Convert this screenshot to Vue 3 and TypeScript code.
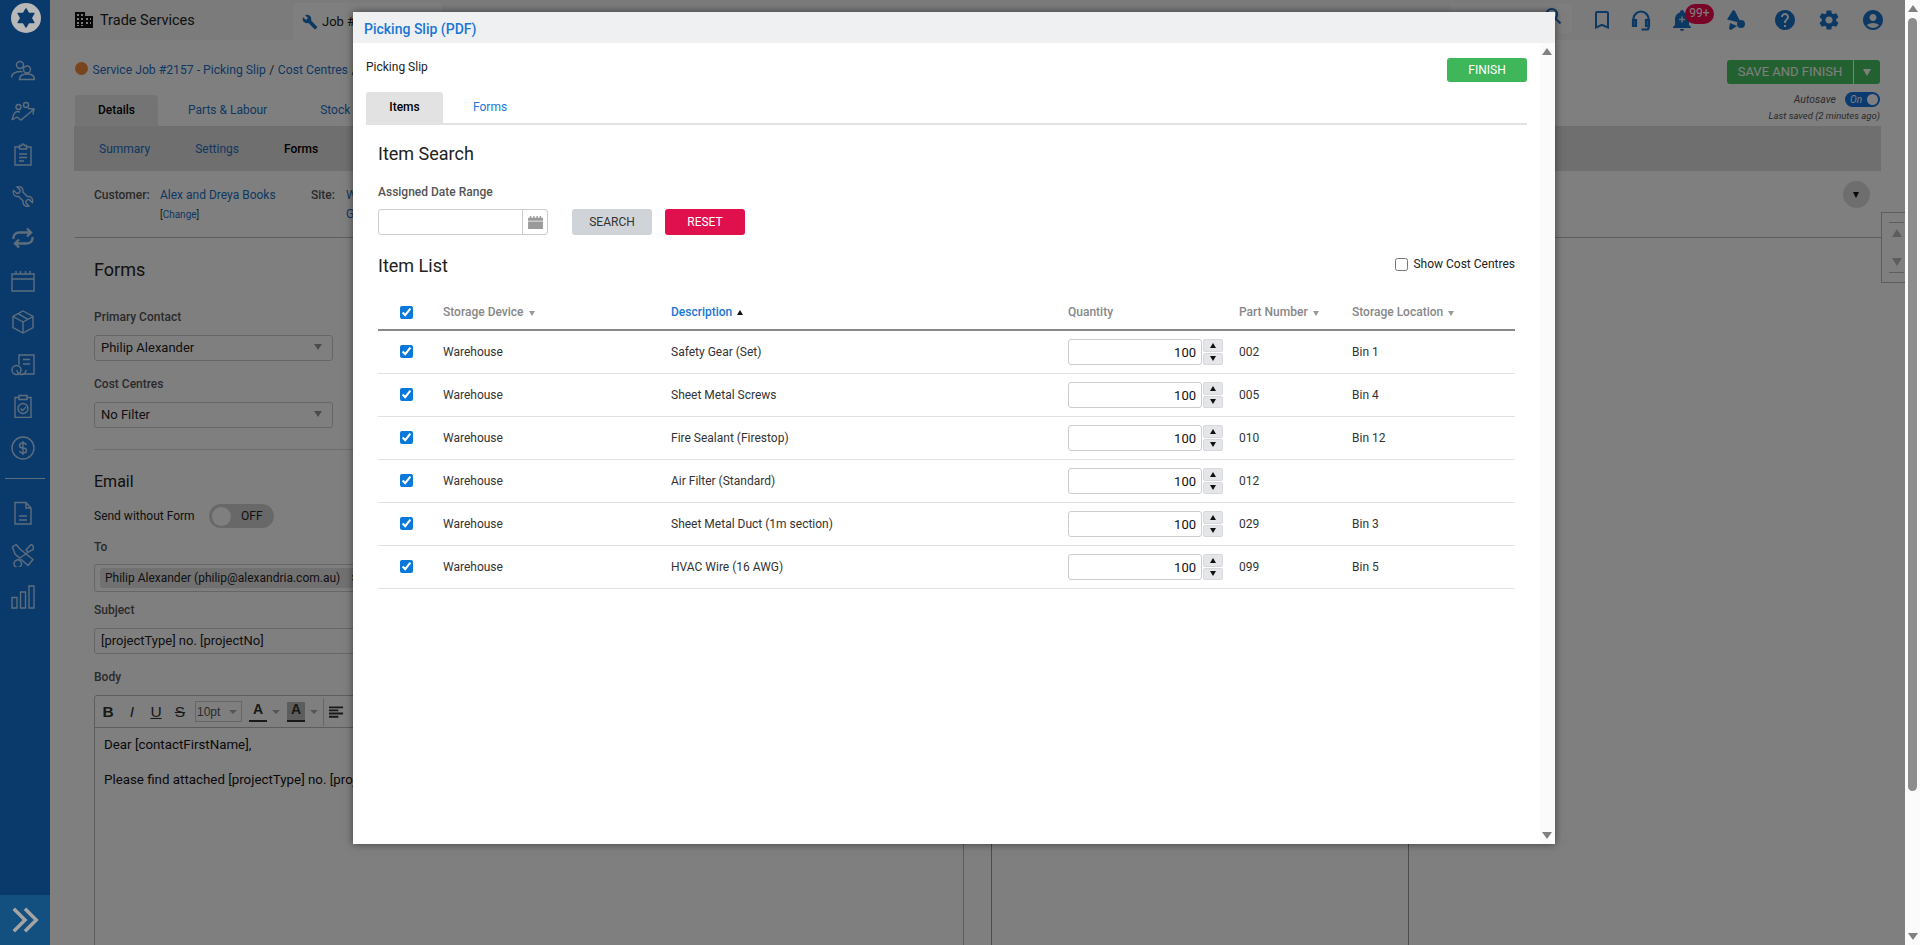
<template>
  <div class="app">
    <div class="page">
      <aside class="sidebar">
        <div class="logo">
          <svg viewBox="0 0 24 24" width="20" height="20"><path d="M12 1l3.200 5.500h6.300L18.400 12l3.100 5.500h-6.300L12 23l-3.200-5.500H2.500L5.600 12 2.500 6.500h6.300z" fill="#0a3a6b" stroke="#0a3a6b" stroke-width="1.500" stroke-linejoin="round" /></svg>
        </div>
        <template v-for="(icon, i) in navIcons" :key="i">
          <div v-if="i === 10" class="navSep"></div>
          <svg class="navIcon" viewBox="0 0 24 24" fill="none" :stroke-width="icon.width"><path :d="icon.d" /></svg>
        </template>
        <div class="expand">
          <svg viewBox="0 0 24 24" width="30" height="30" fill="none" stroke="#a4a4a4" stroke-width="2.800"><path d="M3 3l9 9-9 9M12 3l9 9-9 9" /></svg>
        </div>
      </aside>

      <div class="main">
        <header class="topbar">
          <svg class="buildingIcon" viewBox="0 0 18 16" width="18" height="16"><path d="M0 0h10v4h8v12H0zM2 2v2h2V2zm4 0v2h2V2zM2 6v2h2V6zm4 0v2h2V6zm5 0v2h2V6zm4 0v2h1V6zM2 10v2h2v-2zm4 0v2h2v-2zm5 0v2h2v-2zm4 0v2h1v-2zM2 14h2v-1H2zm4 0h2v-1H6z" fill="#111" /></svg>
          <span class="company">Trade Services</span>
          <div class="jobTab">
            <svg viewBox="0 0 24 24" width="16" height="16"><path d="M22.700 19l-9.100-9.100c.9-2.300.4-5-1.500-6.900-2-2-5-2.400-7.400-1.300L9 6 6 9 1.600 4.700C.4 7.100.9 10.100 2.900 12.100c1.900 1.900 4.600 2.400 6.900 1.500l9.100 9.100c.4.4 1 .4 1.400 0l2.300-2.300c.5-.4.5-1.100.1-1.400z" fill="#1870c8" /></svg>
            <span>Job #</span>
          </div>
          <div class="searchBox">
            <svg viewBox="0 0 24 24" width="20" height="20" fill="none" stroke="#1870c8" stroke-width="2.400"><path d="M4 10a6.500 6.500 0 1 0 13 0a6.500 6.500 0 1 0-13 0M15 15l6 6" /></svg>
          </div>
          <div class="tools">
            <svg class="tool" viewBox="0 0 24 24"><path d="M17 3H7c-1.100 0-2 .9-2 2v16l7-3 7 3V5c0-1.100-.9-2-2-2zm0 15l-5-2.180L7 18V5h10v13z" /></svg>
            <svg class="tool headset" viewBox="0 0 24 24" stroke="#1870c8" stroke-width="2.200"><path d="M4.500 17v-6a7.500 7.500 0 0 1 15 0v6M4 12h3v6H4zM20 12h-3v6h3zM19.500 18v2c0 1-1 1.500-2 1.500h-5" /></svg>
            <div class="bell">
              <svg class="tool" viewBox="0 0 24 24"><path d="M12 23c1.100 0 2-.9 2-2h-4c0 1.100.9 2 2 2zm7-6v-5.500c0-3.400-1.900-6.200-5-6.900V4c0-1-.9-2-2-2s-2 1-2 2v.6c-3.100.7-5 3.500-5 6.900V17l-2 2v1h18v-1l-2-2z" /><path d="M12 8.500v6M9 11.500h6" stroke="#cfd8e0" stroke-width="1.600" /></svg>
              <span class="badge">99+</span>
            </div>
            <svg class="tool megaphone" viewBox="0 0 24 24"><path d="M9 2l2 1 6 12-14-3.500zM17 12a4 4 0 1 1 0 8 4 4 0 0 1 0-8zM6 15l7 3-6 4-2-1z" /></svg>
            <svg class="tool help" viewBox="0 0 24 24"><path d="M12 2C6.480 2 2 6.480 2 12s4.480 10 10 10 10-4.480 10-10S17.520 2 12 2zm1 17h-2v-2h2v2zm2.070-7.750l-.9.92C13.450 12.900 13 13.500 13 15h-2v-.5c0-1.100.45-2.100 1.170-2.830l1.240-1.260c.37-.36.59-.86.59-1.410 0-1.100-.9-2-2-2s-2 .9-2 2H8c0-2.210 1.790-4 4-4s4 1.790 4 4c0 .88-.36 1.680-.93 2.250z" /></svg>
            <svg class="tool gear" viewBox="0 0 24 24"><path d="M19.140 12.940c.04-.3.06-.61.06-.94 0-.32-.02-.64-.07-.94l2.030-1.580c.18-.14.23-.41.12-.61l-1.920-3.320c-.12-.22-.37-.29-.59-.22l-2.390.96c-.5-.38-1.030-.7-1.620-.94l-.36-2.540c-.04-.24-.24-.41-.48-.41h-3.840c-.24 0-.43.17-.47.41l-.36 2.540c-.59.24-1.130.57-1.620.94l-2.390-.96c-.22-.08-.47 0-.59.22L2.740 8.870c-.12.21-.08.47.12.61l2.030 1.580c-.05.3-.09.63-.09.94s.02.64.07.94l-2.030 1.580c-.18.14-.23.41-.12.61l1.920 3.320c.12.22.37.29.59.22l2.390-.96c.5.38 1.030.7 1.620.94l.36 2.540c.05.24.24.41.48.41h3.840c.24 0 .44-.17.47-.41l.36-2.540c.59-.24 1.130-.56 1.620-.94l2.390.96c.22.08.47 0 .59-.22l1.920-3.320c.12-.22.07-.47-.12-.61l-2.010-1.580zM12 15.600c-1.980 0-3.600-1.620-3.600-3.600s1.620-3.600 3.600-3.600 3.600 1.620 3.600 3.600-1.620 3.600-3.600 3.600z" /></svg>
            <svg class="tool gear" viewBox="0 0 24 24"><path d="M12 2C6.480 2 2 6.480 2 12s4.480 10 10 10 10-4.480 10-10S17.520 2 12 2zm0 4c1.930 0 3.500 1.570 3.500 3.500S13.930 13 12 13s-3.500-1.570-3.500-3.500S10.070 6 12 6zm0 14c-2.030 0-4.430-.82-6.140-2.880C7.550 15.800 9.680 15 12 15s4.450.8 6.140 2.120C16.430 19.180 14.030 20 12 20z" /></svg>
          </div>
        </header>

        <div class="pageHead">
          <div class="crumbs">
            <span class="dot"></span>
            <a>Service Job #2157 - Picking Slip</a> / <a>Cost Centres</a> /
          </div>
          <div class="saveBlock">
            <div class="saveBtn">
              <span class="saveMain">SAVE AND FINISH</span>
              <span class="saveCaret"></span>
            </div>
            <div class="autosave">
              <em>Autosave</em>
              <span class="autoToggle"><em>On</em><i></i></span>
            </div>
            <em class="lastSaved">Last saved (2 minutes ago)</em>
          </div>
        </div>

        <nav class="tabs">
          <a class="tab tabActive">Details</a>
          <a class="tab">Parts &amp; Labour</a>
          <a class="tab">Stock</a>
        </nav>
        <nav class="subTabs">
          <a>Summary</a>
          <a>Settings</a>
          <b>Forms</b>
        </nav>

        <section class="infoRow">
          <div class="infoLabel">Customer:</div>
          <div class="infoValue">
            <a>Alex and Dreya Books</a>
            <small>[<a>Change</a>]</small>
          </div>
          <div class="infoLabel siteLabel">Site:</div>
          <div class="infoValue siteValue">
            <a>W</a>
            <a>G</a>
          </div>
          <span class="collapseBtn"></span>
        </section>

        <div class="content">
          <div class="formCol">
            <h2>Forms</h2>
            <label>Primary Contact</label>
            <div class="select narrow">Philip Alexander<i></i></div>
            <label class="gapped">Cost Centres</label>
            <div class="select narrow">No Filter<i></i></div>
            <hr />
            <h3>Email</h3>
            <div class="sendRow">
              <span>Send without Form</span>
              <span class="offToggle"><i></i>OFF</span>
            </div>
            <label class="toLabel">To</label>
            <div class="toInput"><span class="chip">Philip Alexander (philip@alexandria.com.au) <s>×</s></span></div>
            <label class="subjectLabel">Subject</label>
            <div class="select">[projectType] no. [projectNo]</div>
            <label class="bodyLabel">Body</label>
            <div class="editor">
              <div class="toolbar">
                <b class="tb">B</b><em class="tb italic">I</em><u class="tb">U</u><s class="tb">S</s>
                <span class="sizeBox">10pt<i></i></span>
                <span class="colorA">A</span><i class="tbCaret"></i>
                <span class="colorA shaded">A</span><i class="tbCaret"></i>
                <span class="tbSep"></span>
                <svg viewBox="0 0 16 12" width="15" height="12" fill="#333"><path d="M0 0h15v2H0zM0 3.300h10v2H0zM0 6.600h15v2H0zM0 10h10v2H0z" /></svg>
              </div>
              <div class="editorBody">
                <p>Dear [contactFirstName],</p>
                <p>Please find attached [projectType] no. [projectNo].</p>
              </div>
            </div>
          </div>
          <div class="previewPane"></div>
        </div>

        <div class="sideScroll">
          <span class="triUp"></span>
          <span class="triDown"></span>
        </div>
      </div>

      <div class="overlay"></div>
    </div>

    <div class="pageScroll">
      <span class="sbUp"></span>
      <span class="sbThumb"></span>
      <span class="sbDown"></span>
    </div>

    <div class="modal">
      <div class="modalHead">Picking Slip (PDF)</div>
      <div class="modalBody">
        <div class="modalScroll">
          <span class="sbUp"></span>
          <span class="sbDown"></span>
        </div>
        <div class="slipRow">
          <span>Picking Slip</span>
          <button class="finish">FINISH</button>
        </div>
        <div class="modalTabs">
          <a class="modalTab modalTabActive">Items</a>
          <a class="modalTab">Forms</a>
        </div>
        <div class="itemsPane">
          <h4>Item Search</h4>
          <label class="dateLabel">Assigned Date Range</label>
          <div class="searchRow">
            <div class="dateInput">
              <span class="dateBtn">
                <svg viewBox="0 0 16 14" width="15" height="13" fill="#9a9a9a"><path d="M0 2h2V0h1.500v2h2V0H7v2h2V0h1.500v2h2V0H14v2h2v3H0zM0 6h16v8H0z" /></svg>
              </span>
            </div>
            <button class="btnSearch">SEARCH</button>
            <button class="btnReset">RESET</button>
          </div>
          <div class="listHead">
            <h4>Item List</h4>
            <label class="costCheck"><input type="checkbox" />Show Cost Centres</label>
          </div>
          <div class="tableHead row">
            <span><input type="checkbox" checked /></span>
            <span>Storage Device <i class="caretDown"></i></span>
            <span class="sorted">Description <i class="caretUp"></i></span>
            <span>Quantity</span>
            <span>Part Number <i class="caretDown"></i></span>
            <span>Storage Location <i class="caretDown"></i></span>
          </div>
          <div v-for="item in items" :key="item.part" class="row itemRow">
            <span><input type="checkbox" checked /></span>
            <span>Warehouse</span>
            <span>{{ item.name }}</span>
            <span class="qty">
              <input type="text" :value="100" />
              <span class="spin">
                <span><i class="spinUp"></i></span>
                <span><i class="spinDown"></i></span>
              </span>
            </span>
            <span>{{ item.part }}</span>
            <span>{{ item.bin }}</span>
          </div>
        </div>
      </div>
    </div>
  </div>
</template>

<script setup lang="ts">
interface NavIcon {
  d: string,
  width: number,
}
interface Item {
  name: string,
  part: string,
  bin: string,
}

const navIcons: NavIcon[] = [
  { width: 1.4, d: 'M5.500 7a3.500 3.500 0 1 0 7 0a3.500 3.500 0 1 0-7 0M12.500 11.500a3.500 3.500 0 1 0 7 0a3.500 3.500 0 1 0-7 0M.5 19.500c0-3.500 3.500-6 8.500-6 1 0 1.800.1 2.600.4M8.500 21.500c0-3.500 3-5.500 7.500-5.500s7.500 2 7.500 5.500z' },
  { width: 1.4, d: 'M5 7a2.500 2.500 0 1 0 5 0a2.500 2.500 0 1 0-5 0M12.500 5a2.500 2.500 0 1 0 5 0a2.500 2.500 0 1 0-5 0M1 20l2-6c1-2 3-3 6-2M1 20l5-3 4 3 12-10M17 8.500l6 .5-1 5.500' },
  { width: 1.4, d: 'M8.500 5H4v18h16V5h-4.500M8.500 3.500h2.500c0-2 2-2 2.500 0h2V7h-7zM8 12h8M8 15.500h8M8 19h5' },
  { width: 1.4, d: 'M2.500 6.500 6 9.500l2.500-.8.8-2.500L6 3c2.400-1 5 .2 5.800 2.400.3.9.3 1.700.1 2.600l4.400 4.600c.9-.2 1.700-.2 2.600.1 2.200.8 3.400 3.400 2.400 5.800L18 15.400l-2.500.8-.8 2.500 3.300 3.300c-2.400 1-5-.2-5.800-2.400-.3-.9-.3-1.700-.1-2.600L7.700 12.400c-.9.2-1.700.2-2.600-.1C2.900 11.500 1.700 8.900 2.500 6.500z' },
  { width: 2.4, d: 'M2.500 13c-.5-4 2-6.500 6-6.500H19M16 2.500l4 4-4 4M21.500 11c.5 4-2 6.500-6 6.500H5M8 13.500l-4 4 4 4' },
  { width: 1.4, d: 'M1 6h22v17H1zM1 11h22M5 6V3M9.500 6V3M14.500 6V3M19 6V3' },
  { width: 1.4, d: 'M12 1 22 6.500v11L12 23 2 17.500v-11zM2 6.500 12 12l10-5.500M12 12v11M7 3.700 17 9.300' },
  { width: 1.4, d: 'M8 13V3h15v19H11M12 7.500h7M12 12h7M1 18a4.500 4.500 0 1 0 9 0a4.500 4.500 0 1 0-9 0M6 18a4.500 4.500 0 1 0 9 0' },
  { width: 1.4, d: 'M8 3.500H4v20h16v-20h-4M8 1.500h8v4H8zM7 14.500a5 5 0 1 0 10 0a5 5 0 1 0-10 0M9.500 14.500l2 2 3.500-3.500' },
  { width: 1.4, d: 'M1 12a11 11 0 1 0 22 0a11 11 0 1 0-22 0M15.500 9c-.5-1.500-2-2-3.500-2-2 0-3.500 1-3.500 2.500S10 12 12 12s3.500 1 3.500 2.500S14 17 12 17c-1.500 0-3-.5-3.500-2M12 5v14' },
  { width: 1.4, d: 'M4 1.500h11l5 5.500v16H4zM15 1.500V7h5M8 15h8M8 19h8' },
  { width: 1.4, d: 'M5 1.500 1.500 4 4 11l13 11.500 5-6L9 6zM20 1.500c2 .5 3 3 2 5l-3 1.500L6 17a3.800 3.800 0 1 1-3 3 3.800 3.800 0 0 1 3-3M20 1.500 15 7l2 2' },
  { width: 1.4, d: 'M1 12.500h5V23H1zM9.500 7h5v16h-5zM18 1h5v22h-5z' },
];

const items: Item[] = [
  { name: 'Safety Gear (Set)', part: '002', bin: 'Bin 1' },
  { name: 'Sheet Metal Screws', part: '005', bin: 'Bin 4' },
  { name: 'Fire Sealant (Firestop)', part: '010', bin: 'Bin 12' },
  { name: 'Air Filter (Standard)', part: '012', bin: '' },
  { name: 'Sheet Metal Duct (1m section)', part: '029', bin: 'Bin 3' },
  { name: 'HVAC Wire (16 AWG)', part: '099', bin: 'Bin 5' },
];
</script>

<style>
html,
body {
  margin: 0;
  overflow: hidden;
}
</style>

<style scoped>
.app {
  position: relative;
  display: flex;
  width: 1920px;
  height: 945px;
  overflow: hidden;
  font-family: Roboto, "Liberation Sans", sans-serif;
  font-size: 12px;
  color: #222;
  background: #fff;
}
a {
  color: #1d6fc4;
}
.page {
  position: relative;
  display: flex;
  flex: 1;
  min-width: 0;
}
.overlay {
  position: absolute;
  inset: 0;
  background: rgba(0, 0, 0, 0.5);
}

/* sidebar */
.sidebar {
  position: relative;
  flex: none;
  width: 50px;
  display: flex;
  flex-direction: column;
  align-items: center;
  padding-top: 3px;
  background: #1474d6;
  box-sizing: border-box;
}
.logo {
  position: relative;
  z-index: 1;
  width: 30px;
  height: 30px;
  margin: 0 0 25px 1px;
  border-radius: 50%;
  background: #b8b8b8;
  display: flex;
  align-items: center;
  justify-content: center;
}
.navIcon {
  width: 24px;
  height: 24px;
  margin: 0 4px 18px 0;
  flex: none;
  stroke: #bcdcfa;
}
.navSep {
  width: 40px;
  height: 1px;
  margin: 0 0 22px;
  background: #bcdcfa;
}
.expand {
  position: absolute;
  left: 0;
  bottom: 0;
  width: 50px;
  height: 50px;
  background: #269eff;
  display: flex;
  align-items: center;
  justify-content: center;
}
.expand svg {
  position: relative;
  z-index: 1;
}

/* top bar */
.main {
  position: relative;
  flex: 1;
  min-width: 0;
  padding-right: 24px;
}
.topbar {
  position: relative;
  display: flex;
  align-items: center;
  height: 40px;
  margin-right: -24px;
  padding-left: 25px;
  background: #f6f6f6;
}
.buildingIcon {
  margin-right: 7px;
}
.company {
  width: 193px;
  font-size: 14.500px;
}
.jobTab {
  display: flex;
  align-items: center;
  gap: 4px;
  align-self: flex-end;
  width: 140px;
  height: 37px;
  padding-left: 9px;
  border-radius: 4px 4px 0 0;
  background: #fff;
  font-size: 13px;
}
.searchBox {
  position: absolute;
  left: 1400px;
  top: 4px;
  width: 122px;
  height: 29px;
  display: flex;
  align-items: center;
  justify-content: flex-end;
  padding-right: 9px;
  box-sizing: border-box;
  background: #fcfcfc;
}
.searchBox svg {
  margin-top: -5px;
}
.tools {
  display: flex;
  align-items: center;
  margin-left: auto;
  padding-right: 20px;
}
.tool {
  width: 24px;
  height: 24px;
  fill: #1870c8;
  margin-left: 20px;
}
.headset {
  fill: none;
  margin-left: 15px;
}
.bell {
  position: relative;
  display: flex;
  margin-left: -3px;
}
.badge {
  position: absolute;
  left: 35px;
  top: -4px;
  width: 29px;
  height: 20px;
  border-radius: 10px;
  background: #f00a50;
  color: #fff;
  font-size: 12px;
  line-height: 19px;
  text-align: center;
}
.megaphone {
  margin-left: 30px;
}
.help {
  margin-left: 25px;
}
.gear {
  margin-left: 20px;
}

/* page head */
.pageHead {
  position: relative;
  height: 55px;
  padding: 21px 0 0 25px;
  box-sizing: border-box;
}
.crumbs {
  font-size: 12.200px;
  line-height: 18px;
  color: #333;
  display: flex;
  align-items: center;
  gap: 3.500px;
}
.dot {
  width: 13px;
  height: 13px;
  margin: -3px 1px 0 0;
  border-radius: 50%;
  background: #f08a3c;
}
.saveBlock {
  position: absolute;
  top: 20px;
  right: 1px;
  display: flex;
  flex-direction: column;
  align-items: flex-end;
}
.saveBtn {
  display: flex;
  height: 24px;
  border-radius: 3px;
  overflow: hidden;
  color: #fff;
  font-size: 13px;
  line-height: 24px;
}
.saveMain {
  width: 126px;
  text-align: center;
  background: #48c262;
}
.saveCaret {
  position: relative;
  width: 26px;
  margin-left: 1px;
  background: #48c262;
}
.saveCaret::after {
  content: "";
  position: absolute;
  left: 9px;
  top: 9px;
  border: 4.500px solid transparent;
  border-top: 7px solid #fff;
}
.autosave {
  display: flex;
  align-items: center;
  gap: 9px;
  margin-top: 8px;
  font-size: 10.500px;
  color: #555;
}
.autoToggle {
  display: flex;
  align-items: center;
  justify-content: space-between;
  width: 35px;
  height: 15px;
  padding: 0 2px 0 5px;
  box-sizing: border-box;
  border-radius: 8px;
  background: #1474e0;
  color: #fff;
  font-size: 10px;
}
.autoToggle i {
  width: 11px;
  height: 11px;
  border-radius: 50%;
  background: #fff;
}
.lastSaved {
  margin-top: 2px;
  font-size: 9.500px;
  line-height: 14px;
  color: #555;
}

/* tabs */
.tabs {
  display: flex;
  height: 31px;
  padding-left: 25px;
  font-size: 12px;
  line-height: 31px;
}
.tab {
  padding: 0 30px 0 0;
  margin-left: 30px;
}
.tabActive {
  width: 83px;
  margin-left: 0;
  padding: 0;
  text-align: center;
  border-radius: 3px 3px 0 0;
  background: #e9e9e9;
  color: #000;
  font-weight: 500;
}
.tab:last-child {
  margin-left: 23px;
}
.subTabs {
  display: flex;
  align-items: center;
  gap: 45px;
  height: 45px;
  margin-left: 24px;
  padding-left: 25px;
  background: #dedede;
  font-size: 12px;
}
.subTabs b {
  font-weight: 500;
  color: #000;
}
.infoRow {
  position: relative;
  display: flex;
  height: 67px;
  margin-left: 25px;
  padding: 17px 0 0 19px;
  box-sizing: border-box;
  border-bottom: 1px solid #bbb;
  font-size: 12px;
  line-height: 15px;
}
.infoLabel {
  width: 66px;
  font-weight: 500;
  color: #555;
}
.infoValue {
  display: flex;
  flex-direction: column;
  gap: 4px;
  width: 151px;
}
.infoValue small {
  font-size: 10px;
  line-height: 15px;
  color: #333;
}
.siteLabel {
  width: 35px;
}
.collapseBtn {
  position: absolute;
  right: 11px;
  top: 10px;
  width: 27px;
  height: 27px;
  border-radius: 50%;
  background: #dcdcdc;
}
.collapseBtn::after {
  content: "";
  position: absolute;
  left: 10px;
  top: 11px;
  border: 3.500px solid transparent;
  border-top: 6px solid #111;
}

/* forms column */
.content {
  display: flex;
  gap: 27px;
  margin-left: 44px;
}
.formCol {
  width: 870px;
  flex: none;
}
.previewPane {
  width: 418px;
  height: 700px;
  margin-top: 300px;
  box-sizing: border-box;
  border-left: 1px solid #999;
  border-right: 1px solid #999;
}
.formCol h2 {
  margin: 21px 0 0;
  font-size: 18px;
  line-height: 21px;
  font-weight: 400;
}
.formCol h3 {
  margin: 22px 0 0;
  font-size: 16px;
  line-height: 19px;
  font-weight: 400;
}
.formCol label {
  display: block;
  margin: 0 0 11px;
  font-weight: 500;
  font-size: 12px;
  line-height: 14px;
  color: #555;
}
.formCol h2 + label {
  margin-top: 30px;
}
.gapped {
  margin-top: 16px !important;
}
.select {
  position: relative;
  height: 26px;
  padding-left: 6px;
  box-sizing: border-box;
  border: 1px solid #ccc;
  border-radius: 3px;
  font-size: 13px;
  line-height: 24px;
}
.narrow {
  width: 239px;
}
.select i {
  position: absolute;
  right: 10px;
  top: 8px;
  border: 4px solid transparent;
  border-top: 6px solid #999;
}
.formCol hr {
  height: 0;
  margin: 21px 0 0;
  border: 0;
  border-top: 1px solid #d8d8d8;
}
.sendRow {
  display: flex;
  align-items: center;
  gap: 14px;
  margin-top: 13px;
  font-size: 12px;
}
.offToggle {
  display: flex;
  align-items: center;
  justify-content: space-between;
  width: 65px;
  height: 24px;
  padding: 0 11px 0 3px;
  box-sizing: border-box;
  border-radius: 12px;
  background: #d0d0d0;
  font-size: 12px;
}
.offToggle i {
  width: 19px;
  height: 19px;
  border-radius: 50%;
  background: #fff;
}
.toLabel {
  margin-top: 12px !important;
  margin-bottom: 10px !important;
}
.toInput {
  height: 28px;
  padding: 3px 5px;
  box-sizing: border-box;
  border: 1px solid #ccc;
  border-radius: 3px;
}
.chip {
  display: inline-block;
  padding: 0 5px;
  line-height: 20px;
  border-radius: 3px;
  background: #e2e2e2;
  font-size: 12px;
}
.chip s {
  text-decoration: none;
  margin-left: 8px;
}
.subjectLabel {
  margin-top: 11px !important;
}
.bodyLabel {
  margin-top: 16px !important;
}
.editor {
  height: 400px;
  border: 1px solid #bbb;
  border-radius: 3px 3px 0 0;
}
.toolbar {
  display: flex;
  align-items: center;
  gap: 12px;
  height: 32px;
  padding-left: 7px;
  box-sizing: border-box;
  border-bottom: 1px solid #bbb;
  font-size: 15.500px;
  color: #333;
  font-family: "Liberation Sans", sans-serif;
}
.tb {
  width: 12px;
  text-align: center;
}
.sizeBox {
  display: flex;
  align-items: center;
  justify-content: space-between;
  width: 47px;
  height: 21px;
  margin-left: -3px;
  padding: 0 4px 0 1px;
  box-sizing: border-box;
  border: 1px solid #ccc;
  font-size: 12px;
  color: #555;
}
.sizeBox i,
.tbCaret {
  width: 0;
  border: 4px solid transparent;
  border-top: 4px solid #aaa;
  margin-top: 4px;
}
.tbCaret {
  margin-left: -7px;
  margin-right: 0;
}
.colorA {
  width: 18px;
  height: 18px;
  margin-left: -5px;
  line-height: 15px;
  text-align: center;
  font-weight: 700;
  font-size: 14px;
  border-bottom: 2px solid #333;
}
.shaded {
  background: #bbb;
}
.tbSep {
  width: 1px;
  height: 28px;
  margin: 0 -7px 0 -7px;
  background: #ccc;
}
.editorBody {
  padding: 8px 9px;
  font-size: 13.330px;
  line-height: 17px;
  color: #111;
}
.editorBody p {
  margin: 0 0 18px;
}
.sideScroll {
  position: absolute;
  right: 0;
  top: 212px;
  width: 24px;
  height: 71px;
  box-sizing: border-box;
  border: 1px solid #bbb;
  border-right: 0;
  display: flex;
  flex-direction: column;
  align-items: center;
  justify-content: center;
  gap: 21px;
}
.sideScroll::before,
.sideScroll::after {
  content: "";
  position: absolute;
  left: 7px;
  right: 1px;
  height: 1px;
  background: #bbb;
}
.sideScroll::before {
  top: 9px;
}
.sideScroll::after {
  bottom: 9px;
}
.triUp {
  border: 5px solid transparent;
  border-width: 0 5px 8px;
  border-bottom-color: #bbb;
  margin-left: 6px;
}
.triDown {
  border: 5px solid transparent;
  border-width: 8px 5px 0;
  border-top-color: #bbb;
  margin-left: 6px;
}

/* browser scrollbars */
.pageScroll,
.modalScroll {
  display: flex;
  flex-direction: column;
  align-items: center;
  width: 15px;
  background: #fbfbfb;
}
.pageScroll {
  position: relative;
  flex: none;
}
.sbUp,
.sbDown {
  position: absolute;
  border: 5px solid transparent;
}
.sbUp {
  top: 5px;
  border-width: 0 5px 7px;
  border-bottom-color: #808080;
}
.sbDown {
  bottom: 5px;
  border-width: 7px 5px 0;
  border-top-color: #808080;
}
.modalScroll .sbUp,
.modalScroll .sbDown {
  margin-left: -1px;
}
.sbThumb {
  width: 9px;
  height: 773px;
  margin-top: 18px;
  border-radius: 5px;
  background: #8d8d8d;
}

/* modal */
.modal {
  position: absolute;
  left: 353px;
  top: 12px;
  width: 1202px;
  height: 832px;
  display: flex;
  flex-direction: column;
  background: #fff;
  box-shadow: 0 0 8px rgba(0, 0, 0, 0.5);
}
.modalHead {
  flex: none;
  height: 31px;
  padding-left: 11px;
  background: #eff0f2;
  color: #1a76d8;
  font-size: 14px;
  font-weight: 500;
  line-height: 34px;
}
.modalBody {
  position: relative;
  flex: 1;
  padding: 0 28px 0 13px;
}
.modalScroll {
  position: absolute;
  right: 0;
  top: 0;
  bottom: 0;
}
.slipRow {
  display: flex;
  align-items: center;
  justify-content: space-between;
  height: 24px;
  margin-top: 15px;
}
.slipRow span {
  margin-top: -6px;
}
.finish {
  width: 80px;
  height: 24px;
  padding: 0;
  border: 0;
  border-radius: 3px;
  background: #3fb65a;
  color: #fff;
  font: 12px Roboto, sans-serif;
}
.modalTabs {
  display: flex;
  height: 31px;
  margin-top: 10px;
  border-bottom: 2px solid #e2e2e2;
  line-height: 31px;
}
.modalTab {
  width: 77px;
  text-align: center;
  color: #1a76d8;
}
.modalTabActive {
  background: #e2e2e2;
  border-radius: 3px 3px 0 0;
  color: #000;
  font-weight: 500;
  margin-right: 30px;
}
.modalTab:last-child {
  width: auto;
}
.itemsPane {
  padding: 0 12px 0 12px;
}
.itemsPane h4 {
  margin: 0;
  font-size: 18px;
  line-height: 21px;
  font-weight: 400;
}
.itemsPane > h4 {
  margin-top: 18px;
}
.dateLabel {
  display: block;
  margin-top: 21px;
  font-weight: 500;
  line-height: 14px;
  color: #555;
}
.searchRow {
  display: flex;
  margin-top: 10px;
}
.dateInput {
  position: relative;
  width: 170px;
  height: 26px;
  box-sizing: border-box;
  border: 1px solid #ccc;
  border-radius: 3px;
}
.dateBtn {
  position: absolute;
  right: 0;
  top: 0;
  bottom: 0;
  width: 24px;
  display: flex;
  align-items: center;
  justify-content: center;
  border-left: 1px solid #ccc;
}
.btnSearch,
.btnReset {
  width: 80px;
  height: 26px;
  padding: 0;
  border: 0;
  border-radius: 3px;
  font: 12px Roboto, sans-serif;
}
.btnSearch {
  margin-left: 24px;
  background: #d0d3d7;
  color: #333;
}
.btnReset {
  margin-left: 13px;
  background: #e0104f;
  color: #fff;
}
.listHead {
  display: flex;
  justify-content: space-between;
  margin-top: 20px;
}
.costCheck {
  display: flex;
  align-items: center;
  gap: 5px;
  height: 14px;
  margin-top: 2px;
  font-size: 12px;
}
input[type="checkbox"] {
  width: 13px;
  height: 13px;
  margin: 0;
  accent-color: #0a78d8;
  display: block;
}
.row {
  display: grid;
  grid-template-columns: 65px 228px 397px 171px 113px 1fr;
  align-items: center;
  width: 1137px;
}
.row > span:first-child {
  padding-left: 22px;
}
.tableHead {
  height: 34px;
  margin-top: 19px;
  border-bottom: 2px solid #888;
  color: #888;
  font-weight: 500;
}
.sorted {
  color: #1a76d8;
}
.caretDown,
.caretUp {
  display: inline-block;
  margin-left: 2px;
  border: 3.500px solid transparent;
  vertical-align: 0;
}
.caretDown {
  border-width: 5px 3px 0;
  border-top-color: #999;
}
.caretUp {
  border-width: 0 3px 5px;
  border-bottom-color: #111;
  margin-bottom: 1px;
}
.itemRow {
  height: 43px;
  box-sizing: border-box;
  border-bottom: 1px solid #e2e2e2;
  color: #333;
}
.itemRow input[type="checkbox"] {
  margin-top: -1px;
}
.qty {
  display: flex;
  height: 26px;
}
.qty input {
  width: 134px;
  height: 26px;
  padding: 1px 5px 0 0;
  box-sizing: border-box;
  border: 1px solid #ccc;
  border-radius: 3px;
  outline: none;
  text-align: right;
  font: 13px Roboto, sans-serif;
  color: #111;
}
.spin {
  display: flex;
  flex-direction: column;
  gap: 1px;
  width: 20px;
  margin-left: 1px;
}
.spin > span {
  flex: 1;
  display: flex;
  align-items: center;
  justify-content: center;
  background: #e5e6e9;
  border: 1px solid #d8d9dc;
  border-radius: 2px;
}
.spinUp,
.spinDown {
  border: 3.500px solid transparent;
}
.spinUp {
  border-width: 0 3.500px 5px;
  border-bottom-color: #111;
}
.spinDown {
  border-width: 5px 3.500px 0;
  border-top-color: #111;
}
</style>
